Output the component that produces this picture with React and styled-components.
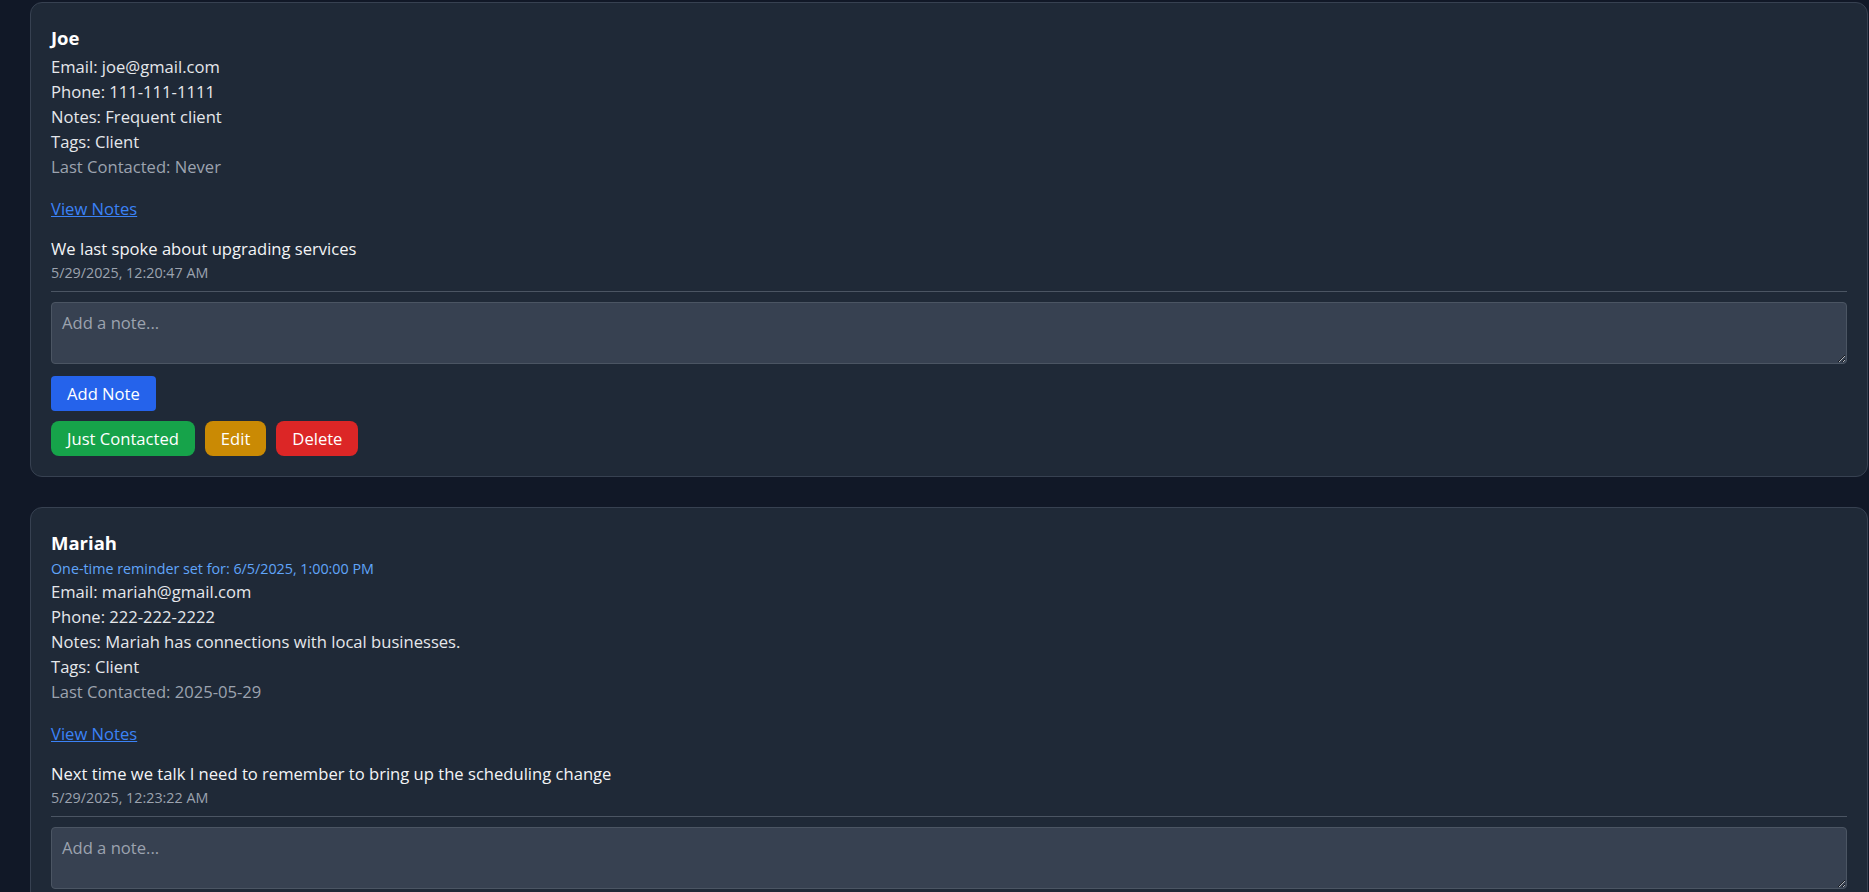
import React from "react";
import styled, { createGlobalStyle } from "styled-components";

const GlobalStyle = createGlobalStyle`
  html, body {
    margin: 0;
    padding: 0;
    background-color: #111827;
    font-family: "Segoe UI", "Open Sans", "Noto Sans", sans-serif;
    color: #e5e7eb;
  }
  * {
    box-sizing: border-box;
  }
`;

const contacts = [
  {
    name: "Joe",
    email: "joe@gmail.com",
    phone: "111-111-1111",
    notes: "Frequent client",
    tags: "Client",
    lastContacted: "Never",
    latestNote: "We last spoke about upgrading services",
    noteTime: "5/29/2025, 12:20:47 AM",
  },
  {
    name: "Mariah",
    reminder: "One-time reminder set for: 6/5/2025, 1:00:00 PM",
    email: "mariah@gmail.com",
    phone: "222-222-2222",
    notes: "Mariah has connections with local businesses.",
    tags: "Client",
    lastContacted: "2025-05-29",
    latestNote: "Next time we talk I need to remember to bring up the scheduling change",
    noteTime: "5/29/2025, 12:23:22 AM",
  },
];

function ContactCard({ contact }) {
  return (
    <Card>
      <Name>{contact.name}</Name>
      {contact.reminder && <Reminder>{contact.reminder}</Reminder>}
      <Line>Email: {contact.email}</Line>
      <Line>Phone: {contact.phone}</Line>
      <Line>Notes: {contact.notes}</Line>
      <Line>Tags: {contact.tags}</Line>
      <Line $muted>Last Contacted: {contact.lastContacted}</Line>

      <NotesLink href="#">View Notes</NotesLink>

      <NoteItem>
        <NoteText>{contact.latestNote}</NoteText>
        <NoteTime>{contact.noteTime}</NoteTime>
      </NoteItem>

      <NoteInput placeholder="Add a note..." />
      <AddButton>Add Note</AddButton>

      <Actions>
        <ActionButton $color="#16a34a">Just Contacted</ActionButton>
        <ActionButton $color="#ca8a04">Edit</ActionButton>
        <ActionButton $color="#dc2626">Delete</ActionButton>
      </Actions>
    </Card>
  );
}

function App() {
  return (
    <>
      <GlobalStyle />
      <Page>
        {contacts.map((c) => (
          <ContactCard key={c.name} contact={c} />
        ))}
      </Page>
    </>
  );
}

export default App;

const Page = styled.div`
  display: flex;
  flex-direction: column;
  gap: 30px;
  padding: 2px 1px 30px 30px;
`;

const Card = styled.div`
  background-color: #1f2937;
  border: 1px solid #374151;
  border-radius: 12px;
  padding: 20px;
  display: flex;
  flex-direction: column;
  align-items: flex-start;
`;

const Name = styled.div`
  font-size: 18.5px;
  font-weight: 700;
  line-height: 30px;
  margin-bottom: 1px;
  color: #ffffff;
`;

const Reminder = styled.div`
  font-size: 14.3px;
  line-height: 20px;
  color: #60a5fa;
`;

const Line = styled.div`
  font-size: 16.6px;
  line-height: 25px;
  color: ${(p) => (p.$muted ? "#9ca3af" : "#e5e7eb")};
`;

const NotesLink = styled.a`
  margin-top: 17px;
  font-size: 16.6px;
  line-height: 25px;
  color: #3b82f6;
  text-decoration: underline;
`;

const NoteItem = styled.div`
  align-self: stretch;
  margin-top: 15px;
  padding-bottom: 6px;
  border-bottom: 1px solid #4b5563;
`;

const NoteText = styled.div`
  font-size: 16.6px;
  line-height: 25px;
  color: #f3f4f6;
`;

const NoteTime = styled.div`
  font-size: 14.3px;
  line-height: 24px;
  color: #9ca3af;
`;

const NoteInput = styled.textarea`
  display: block;
  align-self: stretch;
  margin-top: 10px;
  height: 62px;
  padding: 8px 10px;
  background-color: #374151;
  border: 1px solid #4b5563;
  border-radius: 4px;
  color: #e5e7eb;
  font-family: inherit;
  font-size: 16.6px;
  resize: vertical;
  &::placeholder {
    color: #9ca3af;
  }
`;

const AddButton = styled.button`
  margin-top: 12px;
  height: 35px;
  padding: 0 16px;
  background-color: #2563eb;
  color: #ffffff;
  border: none;
  border-radius: 4px;
  font-family: inherit;
  font-size: 16.6px;
`;

const Actions = styled.div`
  display: flex;
  gap: 10px;
  margin-top: 10px;
`;

const ActionButton = styled.button`
  height: 35px;
  padding: 0 16px;
  background-color: ${(p) => p.$color};
  color: #ffffff;
  border: none;
  border-radius: 8px;
  font-family: inherit;
  font-size: 16.6px;
`;
